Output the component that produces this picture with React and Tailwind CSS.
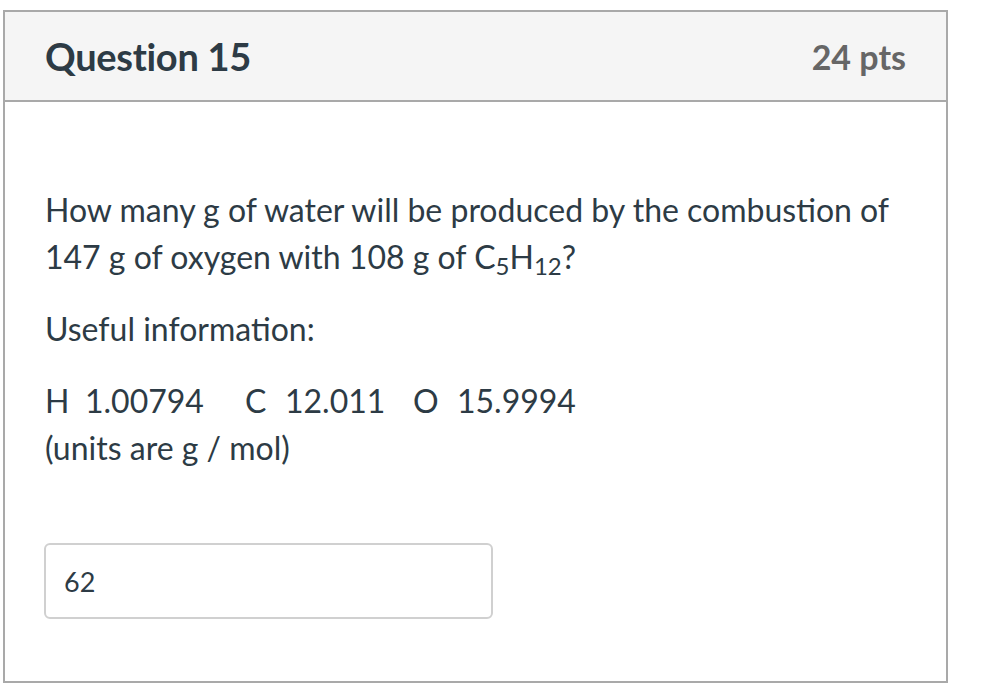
export default function App() {
  return (
    <div className="w-[992px] h-[688px] bg-white pt-[10px] pl-[3px]" style={{ fontFamily: "Lato, 'Noto Sans', sans-serif" }}>
      <div className="w-[945px] h-[673px] border-2 border-[#a9a9a9] flex flex-col">
        <div className="h-[90px] shrink-0 bg-[#f5f5f5] border-b-2 border-[#a9a9a9] flex items-center justify-between pl-[40px] pr-[40px]">
          <h2 className="text-[38px] font-bold text-[#2d3b45] tracking-[-0.3px]">Question 15</h2>
          <span className="text-[34px] font-bold text-[#666666]">24 pts</span>
        </div>
        <div className="pl-[40px] pt-[84px] text-[32px] leading-[47px] text-[#2d3b45]">
          <p>
            How many g of water will be produced by the combustion of<br />
            147 g of oxygen with 108 g of C<sub className="text-[24px]">5</sub>H<sub className="text-[24px]">12</sub>?
          </p>
          <p className="mt-[25px]">Useful information:</p>
          <p className="mt-[25px]">
            <span className="inline-block w-[40px]">H</span>
            <span className="inline-block w-[160px]">1.00794</span>
            <span className="inline-block w-[40px]">C</span>
            <span className="inline-block w-[128px]">12.011</span>
            <span className="inline-block w-[44px]">O</span>
            <span>15.9994</span>
            <br />
            (units are g / mol)
          </p>
          <div className="mt-[72px] -ml-[1px] w-[449px] h-[76px] border-2 border-[#d0d0d0] rounded-[6px] flex items-center pl-[18px] text-[27px]">
            62
          </div>
        </div>
      </div>
    </div>
  );
}
